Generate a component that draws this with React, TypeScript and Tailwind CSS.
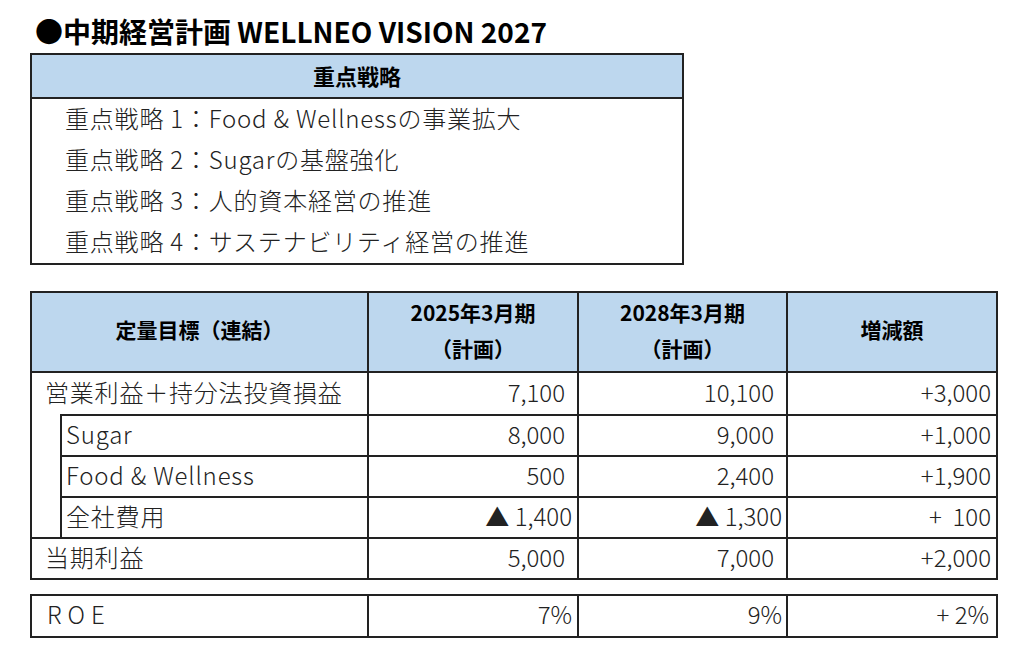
import React from 'react'

const font = { fontFamily: '"Noto Sans CJK JP", "Noto Sans", sans-serif' }

const strategies = [
  '重点戦略 1：Food & Wellnessの事業拡大',
  '重点戦略 2：Sugarの基盤強化',
  '重点戦略 3：人的資本経営の推進',
  '重点戦略 4：サステナビリティ経営の推進',
]

interface Row {
  label: string
  sub?: boolean
  v1: string
  v2: string
  v3: string
  neg?: boolean
}

const rows: Row[] = [
  { label: '営業利益＋持分法投資損益', v1: '7,100', v2: '10,100', v3: '+3,000' },
  { label: 'Sugar', sub: true, v1: '8,000', v2: '9,000', v3: '+1,000' },
  { label: 'Food & Wellness', sub: true, v1: '500', v2: '2,400', v3: '+1,900' },
  { label: '全社費用', sub: true, v1: '▲ 1,400', v2: '▲ 1,300', v3: '+  100', neg: true },
  { label: '当期利益', v1: '5,000', v2: '7,000', v3: '+2,000' },
]

function NumCell({ value, width, pad, top }: { value: string; width: string; pad: string; top: boolean }) {
  return (
    <div
      className={`${width} ${pad} ${top ? 'border-t-2' : ''} flex items-center justify-end pb-[4px] border-r-2 border-[#222] whitespace-pre last:border-r-0`}
    >
      {value}
    </div>
  )
}

export default function App() {
  return (
    <div className="w-[1030px] h-[664px] bg-white text-[#222] pt-[12px]" style={font}>
      <div className="ml-[35px] h-[38px] leading-[38px] text-[28px] font-bold text-black">
        ●中期経営計画 WELLNEO VISION 2027
      </div>

      <div className="ml-[30px] mt-[3px] w-[654px] border-2 border-[#222]">
        <div className="h-[44px] flex items-center justify-center pb-[2px] bg-[#bdd7ee] border-b-2 border-[#222] text-[22px] font-bold text-black">
          重点戦略
        </div>
        <div className="pl-[33px]">
          {strategies.map((s) => (
            <div key={s} className="h-[41px] flex items-center pb-[4px] text-[24px] font-light tracking-[0.8px]">
              {s}
            </div>
          ))}
        </div>
      </div>

      <div className="ml-[30px] mt-[26px] w-[968px] border-2 border-[#222] text-[24px] font-light">
        <div className="h-[80px] flex bg-[#bdd7ee] border-b-2 border-[#222] text-[21px] font-bold text-black">
          <div className="w-[337px] flex items-center justify-center pb-[4px] border-r-2 border-[#222]">
            定量目標（連結）
          </div>
          <div className="w-[210px] flex flex-col items-center justify-center pb-[5px] leading-[36px] border-r-2 border-[#222]">
            <span>2025年3月期</span>
            <span>（計画）</span>
          </div>
          <div className="w-[209px] flex flex-col items-center justify-center pb-[5px] leading-[36px] border-r-2 border-[#222]">
            <span>2028年3月期</span>
            <span>（計画）</span>
          </div>
          <div className="flex-1 flex items-center justify-center pb-[4px]">増減額</div>
        </div>

        {rows.map((r, i) => {
          const top = i > 0
          return (
            <div key={r.label} className="h-[41px] flex">
              <div className={`w-[337px] flex border-r-2 border-[#222] tracking-[0.8px] ${top && !r.sub ? 'border-t-2' : ''}`}>
                {r.sub ? (
                  <>
                    <div className="w-[28px]" />
                    <div className="flex-1 flex items-center pl-[4px] pb-[4px] border-l-2 border-t-2 border-[#222]">
                      {r.label}
                    </div>
                  </>
                ) : (
                  <div className="flex-1 flex items-center pl-[13px] pb-[4px]">{r.label}</div>
                )}
              </div>
              <NumCell value={r.v1} width="w-[210px]" pad={r.neg ? 'pr-[5px]' : 'pr-[12px]'} top={top} />
              <NumCell value={r.v2} width="w-[209px]" pad={r.neg ? 'pr-[4px]' : 'pr-[12px]'} top={top} />
              <NumCell value={r.v3} width="flex-1" pad="pr-[5px]" top={top} />
            </div>
          )
        })}
      </div>

      <div className="ml-[30px] mt-[14px] w-[968px] h-[44px] flex border-2 border-[#222] text-[24px] font-light">
        <div className="w-[337px] flex items-center pl-[15px] pb-[4px] tracking-[6px] border-r-2 border-[#222]">ROE</div>
        <div className="w-[210px] flex items-center justify-end pr-[5px] pb-[4px] border-r-2 border-[#222]">7%</div>
        <div className="w-[209px] flex items-center justify-end pr-[4px] pb-[4px] border-r-2 border-[#222]">9%</div>
        <div className="flex-1 flex items-center justify-end pr-[7px] pb-[4px] whitespace-pre">+ 2%</div>
      </div>
    </div>
  )
}
